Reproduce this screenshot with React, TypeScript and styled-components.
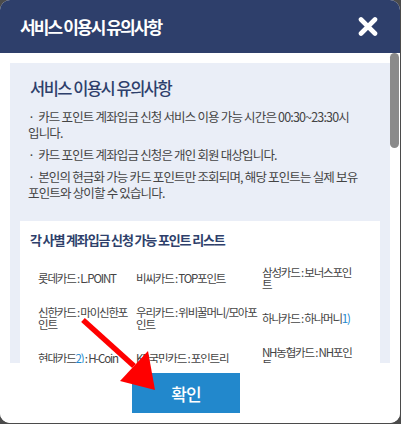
import React from 'react';
import styled, { createGlobalStyle } from 'styled-components';

const NAVY = '#2e3f6b';
const FONT = `'Noto Sans CJK KR', 'Noto Sans', sans-serif`;

const notices = [
  '카드 포인트 계좌입금 신청 서비스 이용 가능 시간은 00:30~23:30시 입니다.',
  '카드 포인트 계좌입금 신청은 개인 회원 대상입니다.',
  '본인의 현금화 가능 카드 포인트만 조회되며, 해당 포인트는 실제 보유 포인트와 상이할 수 있습니다.',
];

interface CardPoint {
  card: string;
  note?: string;
  point: string;
  pointNote?: string;
}

const cards: CardPoint[] = [
  { card: '롯데카드', point: 'L.POINT' },
  { card: '비씨카드', point: 'TOP포인트' },
  { card: '삼성카드', point: '보너스포인트' },
  { card: '신한카드', point: '마이신한포인트' },
  { card: '우리카드', point: '위비꿀머니/모아포인트' },
  { card: '하나카드', point: '하나머니', pointNote: '1)' },
  { card: '현대카드', note: '2)', point: 'H-Coin' },
  { card: 'KB국민카드', point: '포인트리' },
  { card: 'NH농협카드', point: 'NH포인트' },
  { card: '씨티카드', point: '씨티포인트' },
  { card: '광주카드', point: '포인트' },
  { card: '전북카드', point: '포인트' },
  { card: '수협카드', point: '포인트' },
  { card: '제주카드', point: '포인트' },
  { card: 'IBK기업카드', point: '포인트' },
];

const footnotes = [
  '1) 하나카드 하나머니는 하나멤버스 가입 고객만 신청 가능합니다.',
  '2) 현대카드 H-Coin은 M포인트 전환 후 신청 가능합니다.',
];

const guides = [
  '카드사별 최소 신청 포인트 및 수수료는 상이할 수 있습니다.',
  '신청 완료된 포인트는 취소가 불가능합니다.',
  '입금 계좌는 본인 명의 계좌만 등록 가능합니다.',
  '포인트 입금은 신청일로부터 영업일 기준 1~2일 이내 처리됩니다.',
  '카드사 사정에 따라 입금이 지연될 수 있습니다.',
  '법인카드 및 가족카드 포인트는 신청 대상에서 제외됩니다.',
  '1회 신청 가능한 포인트는 카드사 정책에 따릅니다.',
  '계좌 정보 오류로 인한 미입금은 재신청이 필요합니다.',
  '탈회 또는 정지된 카드의 포인트는 조회되지 않습니다.',
  '소멸 예정 포인트가 우선 차감될 수 있습니다.',
  '신청 내역은 마이페이지에서 확인할 수 있습니다.',
  '카드사 시스템 점검 시간에는 신청이 제한됩니다.',
  '입금 금액은 원 단위 미만 절사됩니다.',
  '자세한 사항은 각 카드사 고객센터로 문의해 주세요.',
  '서비스 내용은 사전 고지 후 변경될 수 있습니다.',
  '부정 사용이 확인된 경우 신청이 취소될 수 있습니다.',
];

function App() {
  return (
    <>
      <GlobalStyle />
      <Dialog>
        <Header>
          <HeaderTitle>서비스 이용시 유의사항</HeaderTitle>
          <CloseButton aria-label="닫기">
            <svg width="20" height="19" viewBox="0 0 20 19">
              <path d="M3 2.5 L17 16.5 M17 2.5 L3 16.5" stroke="#fff" strokeWidth="4.6" strokeLinecap="round" />
            </svg>
          </CloseButton>
        </Header>

        <ScrollBody>
          <Panel>
            <PanelTitle>서비스 이용시 유의사항</PanelTitle>
            <NoticeList>
              {notices.map(text => (
                <Notice key={text}>{text}</Notice>
              ))}
            </NoticeList>

            <PointBox>
              <BoxTitle>각 사별 계좌입금 신청 가능 포인트 리스트</BoxTitle>
              <CardGrid>
                {cards.map(c => (
                  <CardCell key={c.card}>
                    {c.card}
                    {c.note && <Ref>{c.note}</Ref>}
                    {' : '}
                    {c.point}
                    {c.pointNote && <Ref>{c.pointNote}</Ref>}
                  </CardCell>
                ))}
              </CardGrid>
              <Footnotes>
                {footnotes.map(f => (
                  <Footnote key={f}>{f}</Footnote>
                ))}
              </Footnotes>
            </PointBox>

            <PointBox>
              <BoxTitle>신청 시 안내사항</BoxTitle>
              <Footnotes>
                {guides.map(g => (
                  <Footnote key={g}>· {g}</Footnote>
                ))}
              </Footnotes>
            </PointBox>
          </Panel>
        </ScrollBody>

        <Footer>
          <ConfirmButton>확인</ConfirmButton>
        </Footer>

        <ScrollThumb />

        <Arrow width="401" height="424" viewBox="0 0 401 424">
          <line x1="83" y1="320" x2="134" y2="366" stroke="#ff0000" strokeWidth="5.5" />
          <polygon points="155,390 120,381 148,351" fill="#ff0000" />
        </Arrow>
      </Dialog>
    </>
  );
}

const GlobalStyle = createGlobalStyle`
  html, body {
    margin: 0;
    padding: 0;
    background: #4b4b4b;
  }
  body {
    font-family: ${FONT};
    width: 401px;
    height: 424px;
    overflow: hidden;
  }
`;

const Dialog = styled.div`
  position: relative;
  width: 400px;
  height: 423px;
  background: #fff;
  border-radius: 10px;
  overflow: hidden;
  display: flex;
  flex-direction: column;
`;

const Header = styled.header`
  flex: 0 0 53px;
  background: ${NAVY};
  display: flex;
  align-items: center;
  justify-content: space-between;
  padding: 0 22px 0 20px;
`;

const HeaderTitle = styled.h1`
  margin: 0;
  color: #fff;
  font-size: 17px;
  font-weight: 700;
  letter-spacing: -1.9px;
`;

const CloseButton = styled.button`
  border: none;
  background: none;
  padding: 0;
  width: 20px;
  height: 19px;
  display: flex;
`;

const ScrollBody = styled.div`
  flex: 1;
  overflow-y: scroll;
  padding: 10px 10px 0 10px;

  &::-webkit-scrollbar {
    width: 10px;
  }
  &::-webkit-scrollbar-track {
    background: #fff;
  }
  &::-webkit-scrollbar-thumb {
    background: #858585;
    border-radius: 5px;
  }
`;

/* the browser's own thumb is hidden in the screenshot, so draw it over the track */
const ScrollThumb = styled.div`
  position: absolute;
  top: 53px;
  left: 390px;
  width: 9px;
  height: 95px;
  border-radius: 5px;
  background: #8a8a8a;
  pointer-events: none;
`;

const Panel = styled.section`
  background: #eaeef7;
  padding: 13px 10px 20px 10px;
`;

const PanelTitle = styled.h2`
  margin: 0 10px;
  color: ${NAVY};
  font-size: 16.5px;
  line-height: 24px;
  font-weight: 500;
  letter-spacing: -1.5px;
`;

const NoticeList = styled.ul`
  list-style: none;
  margin: 9px 0 0;
  padding: 0 8px 0 8px;
`;

const Notice = styled.li`
  font-size: 12.5px;
  line-height: 16px;
  color: #444;
  letter-spacing: -0.83px;
  word-break: keep-all;
  margin-bottom: 6px;

  &::before {
    content: '·';
    margin-right: 4px;
  }
`;

const PointBox = styled.div`
  margin-top: 20px;
  background: #fff;
  padding: 10px 10px 20px 10px;
`;

const BoxTitle = styled.h3`
  margin: 0;
  color: ${NAVY};
  font-size: 13px;
  line-height: 18px;
  font-weight: 700;
  letter-spacing: -1.15px;
`;

const CardGrid = styled.div`
  display: grid;
  grid-template-columns: 98px 126px 98px;
  grid-auto-rows: 40px;
  margin-top: 9px;
  padding-left: 8px;
`;

const CardCell = styled.div`
  align-self: center;
  padding-right: 2px;
  font-size: 11.5px;
  line-height: 12.5px;
  color: #444;
  letter-spacing: -1.2px;
  word-break: break-all;
`;

const Ref = styled.span`
  color: #2288cc;
`;

const Footnotes = styled.ul`
  list-style: none;
  margin: 16px 0 0;
  padding: 0 8px;
`;

const Footnote = styled.li`
  font-size: 12px;
  line-height: 18px;
  color: #666;
  letter-spacing: -0.8px;
  margin-bottom: 6px;
`;

const Footer = styled.footer`
  flex: 0 0 60px;
  display: flex;
  justify-content: flex-start;
  padding: 10px 0 0 132px;
  box-sizing: border-box;
  background: #fff;
`;

const ConfirmButton = styled.button`
  width: 108px;
  height: 40px;
  border: none;
  background: #2288cc;
  color: #fff;
  font-family: ${FONT};
  font-size: 17px;
  font-weight: 500;
  letter-spacing: -1px;
`;

const Arrow = styled.svg`
  position: absolute;
  left: 0;
  top: 0;
  pointer-events: none;
`;

export default App;
